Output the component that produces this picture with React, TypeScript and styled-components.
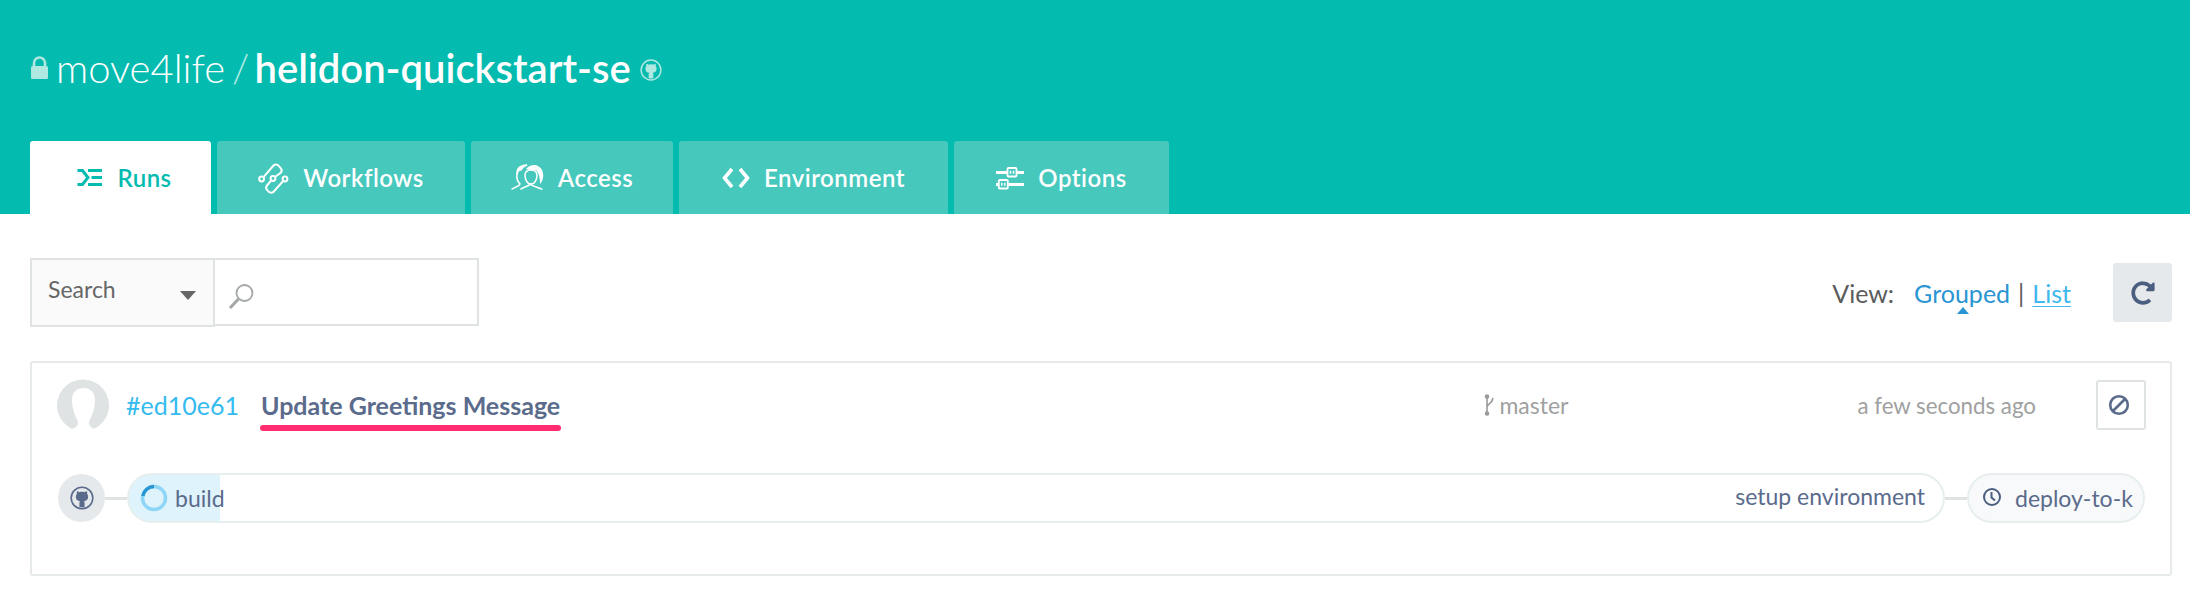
import * as React from 'react';
import styled, { createGlobalStyle } from 'styled-components';
import { FaRedoAlt } from 'react-icons/fa';

const GlobalStyle = createGlobalStyle`
    html, body {
        margin: 0;
        padding: 0;
        background: #ffffff;
        font-family: 'Lato', 'Open Sans', sans-serif;
    }
    * {
        box-sizing: border-box;
    }
`;

const Header = styled.header`
    height: 214px;
    background-color: #03bbaf;
    padding: 0 0 0 30px;
    display: flex;
    flex-direction: column;
    justify-content: space-between;
`;

const TitleRow = styled.h1`
    margin: 42px 0 0;
    display: flex;
    align-items: center;
    height: 52px;
    font-size: 40px;
    font-weight: 400;
    color: #ffffff;
`;

const Owner = styled.span`
    margin-left: 7px;
    font-weight: 300;
`;

const Slash = styled.span`
    margin: 0 5px 0 7px;
    font-weight: 300;
    color: #b5ebe6;
`;

const RepoName = styled.span`
    font-weight: 600;
`;

const RepoMark = styled.span`
    display: flex;
    margin-left: 9px;
    margin-top: 3px;
`;

const TabBar = styled.nav`
    display: flex;
    gap: 6px;
`;

const Tab = styled.a<{ $active?: boolean; $width: number }>`
    width: ${(p) => p.$width}px;
    height: 73px;
    padding-left: ${(p) => (p.$active ? 8 : 0)}px;
    display: flex;
    align-items: center;
    justify-content: center;
    gap: 14px;
    font-size: 24px;
    font-weight: 600;
    letter-spacing: 0.5px;
    border-radius: 3px 3px 0 0;
    color: ${(p) => (p.$active ? '#03bbaf' : '#ffffff')};
    background-color: ${(p) => (p.$active ? '#ffffff' : '#46c8bd')};
`;

const Main = styled.main`
    padding: 44px 18px 0 30px;
`;

const Toolbar = styled.div`
    display: flex;
    justify-content: space-between;
    height: 68px;
`;

const SearchGroup = styled.div`
    display: flex;
`;

const SearchSelect = styled.div`
    width: 185px;
    height: 69px;
    display: flex;
    align-items: center;
    justify-content: space-between;
    padding: 0 17px 8px 16px;
    font-size: 23px;
    color: #666666;
    background-color: #fafafa;
    border: 2px solid #dfe3e3;
`;

const Caret = styled.i`
    margin-top: 14px;
    border-left: 8px solid transparent;
    border-right: 8px solid transparent;
    border-top: 9px solid #666666;
`;

const SearchInput = styled.div`
    width: 264px;
    height: 68px;
    display: flex;
    align-items: center;
    padding: 8px 0 0 13px;
    border: 2px solid #dfe3e3;
    border-left: none;
`;

const ViewGroup = styled.div`
    display: flex;
    align-items: center;
    height: 59px;
    margin-top: 5px;
    font-size: 25px;
`;

const ViewLabel = styled.span`
    color: #5c5c5c;
    margin-right: 20px;
`;

const ViewActive = styled.a`
    position: relative;
    color: #2a95d3;

    &::after {
        content: '';
        position: absolute;
        left: 43px;
        bottom: -6px;
        border-left: 6px solid transparent;
        border-right: 6px solid transparent;
        border-bottom: 7px solid #2a95d3;
    }
`;

const ViewDivider = styled.span`
    color: #5c5c5c;
    margin: 0 8px;
`;

const ViewLink = styled.a`
    color: #41b8ee;
    text-decoration: underline;
    text-underline-offset: 3px;
    text-decoration-thickness: 1px;
`;

const RefreshButton = styled.button`
    width: 59px;
    height: 59px;
    margin: 0 0 0 42px;
    padding: 0;
    border: none;
    border-radius: 3px;
    background-color: #e6e9eb;
    color: #4a5e80;
    display: flex;
    align-items: center;
    justify-content: center;
    font-size: 24px;
`;

const RunCard = styled.section`
    margin-top: 35px;
    height: 215px;
    padding: 16px 24px 0 26px;
    background: #ffffff;
    border: 2px solid #e6eaea;
    border-radius: 3px;
`;

const CommitRow = styled.div`
    display: flex;
    align-items: center;
    height: 52px;
    margin-left: -1px;
`;

const Hash = styled.a`
    margin-left: 17px;
    width: 135px;
    font-size: 25px;
    color: #35bbef;
`;

const CommitTitle = styled.span`
    position: relative;
    flex: 1;
    font-size: 25px;
    font-weight: 700;
    color: #5a6b8c;

    &::before {
        content: '';
        position: absolute;
        left: -1px;
        top: 35px;
        width: 301px;
        height: 6px;
        border-radius: 3px;
        background-color: #ff2d6f;
    }
`;

const Branch = styled.span`
    width: 373px;
    display: flex;
    align-items: center;
    gap: 3px;
    font-size: 23px;
    color: #a0a0a0;
`;

const TimeAgo = styled.span`
    font-size: 22.3px;
    color: #a0a0a0;
`;

const CancelButton = styled.button`
    width: 50px;
    height: 50px;
    margin: 0 0 0 60px;
    padding: 0 4px 0 0;
    display: flex;
    align-items: center;
    justify-content: center;
    background: #ffffff;
    border: 2px solid #dfe3e3;
    border-radius: 3px;
`;

const Pipeline = styled.div`
    display: flex;
    align-items: center;
    margin: 42px 1px 0 0;
    height: 50px;
`;

const SourceNode = styled.div`
    width: 47px;
    height: 48px;
    flex: none;
    border-radius: 50%;
    background-color: #e6e9eb;
    display: flex;
    align-items: center;
    justify-content: center;
`;

const Connector = styled.div`
    width: 22px;
    height: 3px;
    flex: none;
    background-color: #dfe3e3;
`;

const StagePill = styled.div`
    flex: 1;
    height: 50px;
    display: flex;
    align-items: center;
    justify-content: space-between;
    padding: 0 18px 0 11px;
    border: 2px solid #e6eeee;
    border-radius: 25px;
    background: linear-gradient(to right, #dff3fc 91px, #ffffff 91px);
`;

const StageName = styled.span`
    display: flex;
    align-items: center;
    gap: 7px;
    font-size: 23px;
    color: #5a6b8c;
`;

const StageStep = styled.span`
    margin-bottom: 4px;
    font-size: 23px;
    color: #5a6b8c;
`;

const QueuedPill = styled.div`
    width: 178px;
    height: 50px;
    flex: none;
    display: flex;
    align-items: center;
    padding: 0 10px 0 13px;
    gap: 13px;
    border: 2px solid #e6eeee;
    border-radius: 25px;
    background-color: #f8f9fa;
`;

const QueuedName = styled.span`
    overflow: hidden;
    white-space: nowrap;
    font-size: 23px;
    color: #5a6b8c;
`;

const ClockSvg = styled.svg`
    flex: none;
    margin-bottom: 2px;
`;

const LockIcon = () => (
    <svg width="19" height="24" viewBox="0 0 19 24">
        <path d="M4 11V7a5.5 5.5 0 0 1 11 0v4" fill="none" stroke="#b0e8e2" strokeWidth="2.6" />
        <rect x="1" y="10" width="17" height="13" rx="1.5" fill="#b0e8e2" />
    </svg>
);

const octocat =
    'M12 5.8c-1 0-1.8.1-2.5.4C8.6 5.6 7.7 5.2 7 5.2c-.3.9-.3 1.8-.1 2.5-.6.7-1 1.6-1 2.7 0 3.4 2 4.4 4.3 4.7-.4.3-.7.8-.8 1.5v4.4c-.1 0 2.6.9 5.2 0v-4.1c0-.8-.3-1.4-.8-1.8 2.3-.3 4.3-1.3 4.3-4.7 0-1.1-.4-2-1-2.7.2-.7.2-1.6-.1-2.5-.7 0-1.6.4-2.5 1-.7-.3-1.5-.4-2.5-.4z';

const GithubIcon = ({ size, color }: { size: number; color: string }) => (
    <svg width={size} height={size} viewBox="0 0 24 24">
        <circle cx="12" cy="12" r="10.8" fill="none" stroke={color} strokeWidth="1.6" />
        <path d={octocat} fill={color} />
    </svg>
);

const RunsIcon = () => (
    <svg width="26" height="17" viewBox="0 0 26 17" fill="none" stroke="#03bbaf" strokeWidth="3">
        <path d="M0.5 1.5h5l5.5 7-5.5 7h-5" />
        <path d="M11 1.500h14M14.500 8.500h10.500M11 15.500h14" />
    </svg>
);

const WorkflowsIcon = () => (
    <svg width="31" height="32" viewBox="0 0 31 32" fill="none" stroke="#ffffff" strokeWidth="2">
        <circle cx="3.6" cy="17" r="2.4" />
        <circle cx="15" cy="16.5" r="2.4" />
        <circle cx="27" cy="17" r="2.4" />
        <path d="M5.5 15.2L15.5 3.5a3.4 3.4 0 0 1 5 .2l2.2 2.4a3.4 3.4 0 0 1 0 4.6L17 15" />
        <path d="M13.2 18.4L9 23.5a3.4 3.4 0 0 0 0 4.4l1.6 1.8a3.4 3.4 0 0 0 5 0L25.2 19" />
    </svg>
);

const AccessIcon = () => (
    <svg width="33" height="27" viewBox="0 0 33 27" fill="none" stroke="#ffffff" strokeWidth="1.5">
        <path d="M6 9C6 4 10 1 16 1 13 2 11 4 10 6L8 6z" fill="#ffffff" />
        <path d="M7 7C5 12 6 17 9 20 8 23 3 23 .5 25.500" />
        <path d="M9.500 25.500C11 23 17 23 19.500 20 22 23 28 23 31.500 25.500" />
        <path d="M20 20C16 20 14 15 14 11.500 14 8 16 6 20 6S26 8 26 11.500C26 15 24 20 20 20z" />
        <path d="M15 5C18 1 24 0 27 2 31 4 33 9 32 14 31.500 17 30 19 29 20 29 14 28 9 25 6 21 7 18 6 15 5z" fill="#ffffff" stroke="none" />
    </svg>
);

const CodeIcon = () => (
    <svg width="28" height="22" viewBox="0 0 28 22" fill="none" stroke="#ffffff" strokeWidth="3.6">
        <path d="M10 2L2.500 11 10 20M18 2l7.500 9L18 20" />
    </svg>
);

const OptionsIcon = () => (
    <svg width="28" height="24" viewBox="0 0 28 24" fill="none" stroke="#ffffff">
        <path d="M0 6.500h11M21 6.500h7M0 18.500h2M12 18.500h16" strokeWidth="3" />
        <rect x="11.500" y="2" width="9" height="8.500" rx="1" strokeWidth="1.800" />
        <rect x="2.800" y="14" width="9" height="8.500" rx="1" strokeWidth="1.800" />
        <path d="M14.500 4.800v3M17.500 4.800v3M5.800 16.800v3M8.800 16.800v3" strokeWidth="1.500" />
    </svg>
);

const SearchIcon = () => (
    <svg width="27" height="27" viewBox="0 0 27 27" fill="none" stroke="#a3a7a8">
        <circle cx="16.500" cy="10" r="8" strokeWidth="1.800" />
        <path d="M10.500 16L2 25" strokeWidth="3" />
    </svg>
);

const AvatarIcon = () => (
    <svg width="52" height="52" viewBox="0 0 52 52">
        <path
            d="M15 50A26 26 0 1 1 37 50 C35 49 31.500 47 32 43 C32.500 40 38 33 38 21 C38 13 33 9 26.500 9 C20 9 15 13 15 21 C15 33 20.500 40 21 43 C21.500 47 18 49 15 50z"
            fill="#dfe3e4"
        />
    </svg>
);

const BranchIcon = () => (
    <svg width="12" height="22" viewBox="0 0 12 22" fill="none" stroke="#9a9a9a" strokeWidth="1.600">
        <circle cx="3" cy="2.500" r="1.500" fill="#9a9a9a" />
        <circle cx="3" cy="19.500" r="1.500" fill="#9a9a9a" />
        <path d="M3 3v15M3 13c0-3 5-3 6-9" />
    </svg>
);

const BanIcon = () => (
    <svg width="22" height="22" viewBox="0 0 22 22" fill="none" stroke="#5a6b8c" strokeWidth="2.600">
        <circle cx="11" cy="11" r="8.800" />
        <path d="M17 5L5 17" />
    </svg>
);

const SpinnerIcon = () => (
    <svg width="28" height="28" viewBox="0 0 28 28" fill="none" strokeWidth="3.500">
        <circle cx="14" cy="14" r="11.500" stroke="#8dd6f5" />
        <path d="M2.800 12A11.500 11.500 0 0 1 14 2.500" stroke="#2a95d3" />
    </svg>
);

const ClockIcon = () => (
    <ClockSvg width="20" height="20" viewBox="0 0 20 20" fill="none" stroke="#4a5e80" strokeWidth="2">
        <circle cx="10" cy="10" r="8" />
        <path d="M9.500 5v5.500l3.500 3" />
    </ClockSvg>
);

function App() {
    return (
        <>
            <GlobalStyle />
            <Header>
                <TitleRow>
                    <LockIcon />
                    <Owner>move4life</Owner>
                    <Slash>/</Slash>
                    <RepoName>helidon-quickstart-se</RepoName>
                    <RepoMark>
                        <GithubIcon size={22} color="#b0e8e2" />
                    </RepoMark>
                </TitleRow>
                <TabBar>
                    <Tab $active $width={181}>
                        <RunsIcon />
                        Runs
                    </Tab>
                    <Tab $width={248}>
                        <WorkflowsIcon />
                        Workflows
                    </Tab>
                    <Tab $width={202}>
                        <AccessIcon />
                        Access
                    </Tab>
                    <Tab $width={269}>
                        <CodeIcon />
                        Environment
                    </Tab>
                    <Tab $width={215}>
                        <OptionsIcon />
                        Options
                    </Tab>
                </TabBar>
            </Header>
            <Main>
                <Toolbar>
                    <SearchGroup>
                        <SearchSelect>
                            Search
                            <Caret />
                        </SearchSelect>
                        <SearchInput>
                            <SearchIcon />
                        </SearchInput>
                    </SearchGroup>
                    <ViewGroup>
                        <ViewLabel>View:</ViewLabel>
                        <ViewActive>Grouped</ViewActive>
                        <ViewDivider>|</ViewDivider>
                        <ViewLink>List</ViewLink>
                        <RefreshButton>
                            <FaRedoAlt />
                        </RefreshButton>
                    </ViewGroup>
                </Toolbar>
                <RunCard>
                    <CommitRow>
                        <AvatarIcon />
                        <Hash>#ed10e61</Hash>
                        <CommitTitle>Update Greetings Message</CommitTitle>
                        <Branch>
                            <BranchIcon />
                            master
                        </Branch>
                        <TimeAgo>a few seconds ago</TimeAgo>
                        <CancelButton>
                            <BanIcon />
                        </CancelButton>
                    </CommitRow>
                    <Pipeline>
                        <SourceNode>
                            <GithubIcon size={24} color="#5a6b8c" />
                        </SourceNode>
                        <Connector />
                        <StagePill>
                            <StageName>
                                <SpinnerIcon />
                                build
                            </StageName>
                            <StageStep>setup environment</StageStep>
                        </StagePill>
                        <Connector />
                        <QueuedPill>
                            <ClockIcon />
                            <QueuedName>deploy-to-kubernetes</QueuedName>
                        </QueuedPill>
                    </Pipeline>
                </RunCard>
            </Main>
        </>
    );
}

export default App;
